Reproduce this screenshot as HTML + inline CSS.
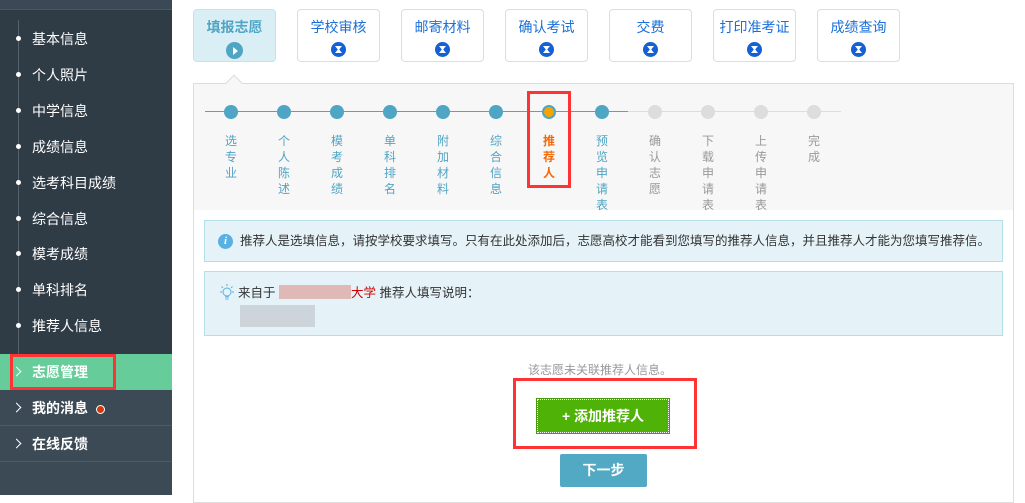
<!DOCTYPE html>
<html><head><meta charset="utf-8"><style>
*{margin:0;padding:0;box-sizing:border-box}
body{width:1025px;height:495px;overflow:hidden;background:#fff;font-family:"Liberation Sans","Noto Sans CJK SC",sans-serif;position:relative}
.abs{position:absolute}
#side{left:0;top:0;width:172px;height:495px;background:#3c4a55}
#side .top{left:0;top:0;width:172px;height:10px;background:#3a4955;border-bottom:1px solid #4a5864}
#side .list{left:0;top:10px;width:172px;height:344px;background:#2f3b45}
.vl{left:18px;top:20px;width:1px;height:334px;background:#55626c}
.it{left:32px;color:#fff;font-size:14px;line-height:16px}
.dot{left:16px;width:5px;height:5px;border-radius:50%;background:#fff}
.grp{left:0;width:172px;height:36px;color:#fff;font-size:14px;font-weight:bold;line-height:36px;padding-left:32px;border-bottom:1px solid #4d5b66}
.chev{position:absolute;left:13px;top:14px;width:7px;height:7px;border-top:1.5px solid #fff;border-right:1.5px solid #fff;transform:rotate(45deg)}
.tab{top:9px;width:83px;height:53px;border:1px solid #ddd;border-radius:4px;background:#fff;text-align:center;color:#1a6fd8;font-size:14px;padding-top:7px}
.tab .ic{width:15px;height:15px;border-radius:50%;background:#1560d4;margin:5px auto 0;position:relative}
.tab .ic:after{content:"";position:absolute;left:4px;top:4px;width:7px;height:7px;background:#fff;clip-path:polygon(0 0,100% 0,60% 50%,100% 100%,0 100%,40% 50%)}
.st{top:105px;width:14px;height:14px;border-radius:50%;background:#4fa5c4}
.sl{top:133px;width:16px;font-size:12px;line-height:16px;color:#4fa5c4;text-align:center}
.g{background:#ddd}
.gt{color:#999}
</style></head><body>
<div id="side" class="abs">
<div class="abs top"></div>
<div class="abs list"></div>
<div class="abs vl"></div>
<div class="abs dot" style="top:36px"></div><div class="abs it" style="top:31px">基本信息</div>
<div class="abs dot" style="top:72px"></div><div class="abs it" style="top:67px">个人照片</div>
<div class="abs dot" style="top:108px"></div><div class="abs it" style="top:103px">中学信息</div>
<div class="abs dot" style="top:144px"></div><div class="abs it" style="top:139px">成绩信息</div>
<div class="abs dot" style="top:180px"></div><div class="abs it" style="top:175px">选考科目成绩</div>
<div class="abs dot" style="top:216px"></div><div class="abs it" style="top:211px">综合信息</div>
<div class="abs dot" style="top:251px"></div><div class="abs it" style="top:246px">模考成绩</div>
<div class="abs dot" style="top:287px"></div><div class="abs it" style="top:282px">单科排名</div>
<div class="abs dot" style="top:323px"></div><div class="abs it" style="top:318px">推荐人信息</div>
<div class="abs grp" style="top:354px;background:#66cc99;border:none"><span class="chev"></span>志愿管理</div>
<div class="abs" style="left:10px;top:354px;width:106px;height:36px;border:3px solid #f33"></div>
<div class="abs grp" style="top:390px"><span class="chev"></span>我的消息 <span style="display:inline-block;width:9px;height:9px;border-radius:50%;background:#d33a0a;border:1px solid #fff;margin-left:4px;vertical-align:-1px"></span></div>
<div class="abs grp" style="top:426px"><span class="chev"></span>在线反馈</div>
</div>

<div class="abs tab" style="left:193px;background:#d9eef5;border-color:#c4e2ec;color:#4fa5c4;font-weight:bold">填报志愿<div style="width:17px;height:17px;border-radius:50%;background:#4fa5c4;margin:5px auto 0;position:relative"><div style="position:absolute;left:7px;top:5px;border-left:5px solid #fff;border-top:4px solid transparent;border-bottom:4px solid transparent"></div></div></div>
<div class="abs tab" style="left:297px">学校审核<div class="ic"></div></div>
<div class="abs tab" style="left:401px">邮寄材料<div class="ic"></div></div>
<div class="abs tab" style="left:505px">确认考试<div class="ic"></div></div>
<div class="abs tab" style="left:609px">交费<div class="ic"></div></div>
<div class="abs tab" style="left:713px">打印准考证<div class="ic"></div></div>
<div class="abs tab" style="left:817px">成绩查询<div class="ic"></div></div>

<div class="abs" style="left:193px;top:83px;width:821px;height:420px;border:1px solid #ddd;background:#fff"></div>
<div class="abs" style="left:194px;top:84px;width:819px;height:126px;background:#f7f7f7"></div>
<div class="abs" style="left:228px;top:77px;width:12px;height:12px;background:#f7f7f7;border-left:1px solid #ddd;border-top:1px solid #ddd;transform:rotate(45deg)"></div>

<div class="abs" style="left:205px;top:111px;width:423px;height:1px;background:#4fa5c4"></div>
<div class="abs" style="left:628px;top:111px;width:213px;height:1px;background:#ddd"></div>
<div class="abs st" style="left:224px"></div><div class="abs sl" style="left:223px">选专业</div>
<div class="abs st" style="left:277px"></div><div class="abs sl" style="left:276px">个人陈述</div>
<div class="abs st" style="left:330px"></div><div class="abs sl" style="left:329px">模考成绩</div>
<div class="abs st" style="left:383px"></div><div class="abs sl" style="left:382px">单科排名</div>
<div class="abs st" style="left:436px"></div><div class="abs sl" style="left:435px">附加材料</div>
<div class="abs st" style="left:489px"></div><div class="abs sl" style="left:488px">综合信息</div>
<div class="abs st" style="left:542px;background:#f5a300;border:2px solid #4fa5c4"></div><div class="abs sl" style="left:541px;color:#f26b0a;font-weight:bold">推荐人</div>
<div class="abs st" style="left:595px"></div><div class="abs sl" style="left:594px">预览申请表</div>
<div class="abs st g" style="left:648px"></div><div class="abs sl gt" style="left:647px">确认志愿</div>
<div class="abs st g" style="left:701px"></div><div class="abs sl gt" style="left:700px">下载申请表</div>
<div class="abs st g" style="left:754px"></div><div class="abs sl gt" style="left:753px">上传申请表</div>
<div class="abs st g" style="left:807px"></div><div class="abs sl gt" style="left:806px">完成</div>
<div class="abs" style="left:527px;top:91px;width:44px;height:97px;border:3px solid #f33"></div>

<div class="abs" style="left:204px;top:220px;width:799px;height:42px;background:#e5f2f8;border:1px solid #b3dfe8;font-size:12.5px;color:#333;line-height:40px;padding-left:35px;white-space:nowrap">推荐人是选填信息，请按学校要求填写。只有在此处添加后，志愿高校才能看到您填写的推荐人信息，并且推荐人才能为您填写推荐信。</div>
<div class="abs" style="left:218px;top:234px;width:15px;height:15px;border-radius:50%;background:#5ab0e0;color:#fff;font-size:11px;font-weight:bold;text-align:center;line-height:15px;font-family:'Liberation Serif',serif;font-style:italic">i</div>
<div class="abs" style="left:204px;top:271px;width:799px;height:65px;background:#e5f2f8;border:1px solid #b3dfe8"></div>
<svg class="abs" style="left:218px;top:283px" width="18" height="20" viewBox="0 0 18 20" fill="none" stroke="#5ab0e0" stroke-width="1"><circle cx="9" cy="9" r="4"/><path d="M7 14h4M7.5 16h3M9 1v2M2 9h2M14 9h2M3.5 3.5l1.4 1.4M14.5 3.5l-1.4 1.4"/></svg>
<div class="abs" style="left:238px;top:285px;font-size:12.5px;color:#333;line-height:16px">来自于 <span style="display:inline-block;width:72px;height:14px;background:#dcaaa4;vertical-align:-2px;opacity:.8"></span><span style="color:#c00">大学</span> 推荐人填写说明：</div>
<div class="abs" style="left:240px;top:305px;width:75px;height:22px;background:#cdd5db"></div>

<div class="abs" style="left:528px;top:361px;font-size:12px;color:#999">该志愿未关联推荐人信息。</div>
<div class="abs" style="left:513px;top:378px;width:184px;height:71px;border:3px solid #f33"></div>
<div class="abs" style="left:537px;top:399px;width:132px;height:34px;background:#4fb307;border:1px dotted #fff;outline:1px solid #4a9a10;color:#fff;font-weight:bold;font-size:14px;text-align:center;line-height:32px">+ 添加推荐人</div>
<div class="abs" style="left:560px;top:454px;width:87px;height:33px;background:#52a9c3;border-radius:2px;color:#fff;font-weight:bold;font-size:14px;text-align:center;line-height:33px">下一步</div>
</body></html>
